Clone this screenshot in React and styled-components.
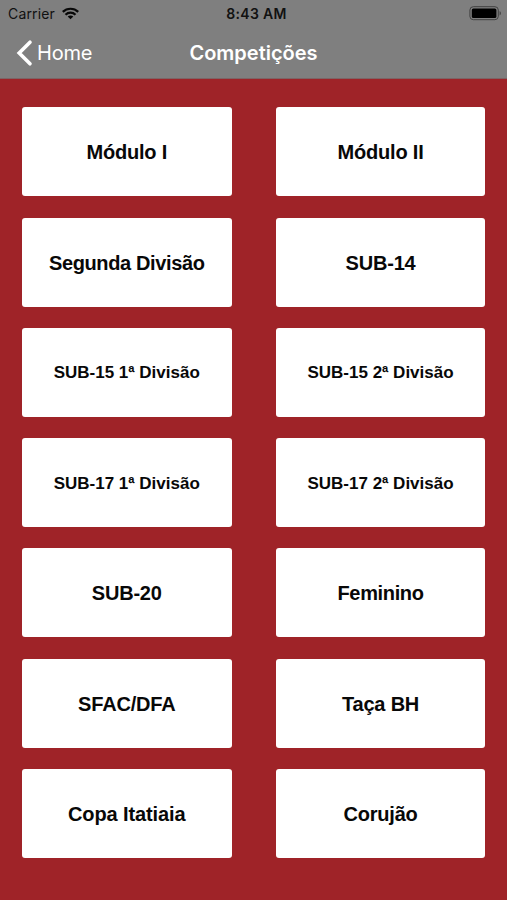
import styled, { createGlobalStyle } from 'styled-components';

const GlobalStyle = createGlobalStyle`
  * {
    box-sizing: border-box;
  }

  body {
    margin: 0;
    background: #9f2328;
  }
`

const Screen = styled.div`
  width: 507px;
  height: 900px;
  background: #9f2328;
  overflow: hidden;
`

const Header = styled.header`
  height: 79px;
  background: #7f7f7f;
  border-bottom: 1px solid #7d6465;
  font-family: Inter, Roboto, sans-serif;
`

const StatusBar = styled.div`
  display: grid;
  grid-template-columns: 1fr auto 1fr;
  align-items: center;
  height: 27px;
  padding: 0 5px 0 8px;
  color: #111;
`

const Carrier = styled.div`
  display: flex;
  align-items: center;
  gap: 7px;
  font-size: 14px;
  letter-spacing: 0.15px;
`

const Time = styled.div`
  font-size: 14px;
  font-weight: 600;
  letter-spacing: 0.35px;
  padding-left: 3px;
`

const Battery = styled.svg`
  justify-self: end;
`

const NavBar = styled.nav`
  display: grid;
  grid-template-columns: 1fr auto 1fr;
  align-items: center;
  height: 51px;
  padding: 0 15px;
  color: white;
`

const BackButton = styled.button`
  display: flex;
  align-items: center;
  gap: 4px;
  padding: 0;
  border: none;
  background: none;
  color: white;
  font-family: inherit;
  font-size: 20px;
  letter-spacing: -0.2px;
`

const Title = styled.h1`
  margin: 0;
  font-size: 20px;
  line-height: 26px;
  font-weight: 600;
  letter-spacing: 0;
`

const Grid = styled.main`
  display: grid;
  grid-template-columns: 209.5px 209.5px;
  grid-auto-rows: 89px;
  column-gap: 44.3px;
  row-gap: 21.3px;
  padding: 28.3px 0 0 22px;
`

const Card = styled.button`
  display: flex;
  align-items: center;
  justify-content: center;
  padding: 2px 0 0;
  border: none;
  border-radius: 3px;
  background: white;
  color: #080808;
  font-family: 'Liberation Sans', Arial, sans-serif;
  font-weight: bold;
  font-size: 20px;
  letter-spacing: ${props => props.$tracking || '-0.2px'};

  ${props => props.$small && `
    font-size: 17px;
    letter-spacing: 0;
  `}
`

const competitions = [
  { name: 'Módulo I' },
  { name: 'Módulo II' },
  { name: 'Segunda Divisão', tracking: '-0.37px' },
  { name: 'SUB-14' },
  { name: 'SUB-15 1ª Divisão', small: true },
  { name: 'SUB-15 2ª Divisão', small: true },
  { name: 'SUB-17 1ª Divisão', small: true },
  { name: 'SUB-17 2ª Divisão', small: true },
  { name: 'SUB-20' },
  { name: 'Feminino', tracking: '-0.35px' },
  { name: 'SFAC/DFA' },
  { name: 'Taça BH' },
  { name: 'Copa Itatiaia', tracking: '-0.1px' },
  { name: 'Corujão' },
]

function WifiIcon() {
  return (
    <svg width="17" height="13" viewBox="0 0 17 13" fill="none" stroke="#080808" strokeWidth="2.2">
      <path d="M0.8 4.9C5 0.7 12 0.7 16.2 4.9" />
      <path d="M3.5 7.7C6.3 4.9 10.7 4.9 13.5 7.7" />
      <path d="M8.5 12.3L5.7 9.5C7.3 8 9.7 8 11.3 9.5Z" fill="#080808" stroke="none" />
    </svg>
  )
}

function BatteryIcon() {
  return (
    <Battery width="33" height="15" viewBox="0 0 33 15">
      <rect x="0.9" y="0.7" width="28.4" height="13" rx="3.4" fill="none" stroke="#414141" strokeWidth="1" />
      <rect x="2.8" y="2.4" width="24.6" height="9.6" rx="1.6" fill="#000" />
      <path d="M30.6 5C32.4 5.7 32.4 8.7 30.6 9.4Z" fill="#414141" />
    </Battery>
  )
}

function BackIcon() {
  return (
    <svg width="18" height="28" viewBox="0 0 18 28" fill="none" stroke="white" strokeWidth="3.6" strokeLinecap="round" strokeLinejoin="miter">
      <path d="M15 3.2L4.2 14L15 24.8" />
    </svg>
  )
}

export default function App() {
  return (
    <Screen>
      <GlobalStyle />
      <Header>
        <StatusBar>
          <Carrier>
            Carrier
            <WifiIcon />
          </Carrier>
          <Time>8:43 AM</Time>
          <BatteryIcon />
        </StatusBar>
        <NavBar>
          <BackButton>
            <BackIcon />
            Home
          </BackButton>
          <Title>Competições</Title>
        </NavBar>
      </Header>
      <Grid>
        {competitions.map(item => (
          <Card key={item.name} $small={item.small} $tracking={item.tracking}>{item.name}</Card>
        ))}
      </Grid>
    </Screen>
  )
}
